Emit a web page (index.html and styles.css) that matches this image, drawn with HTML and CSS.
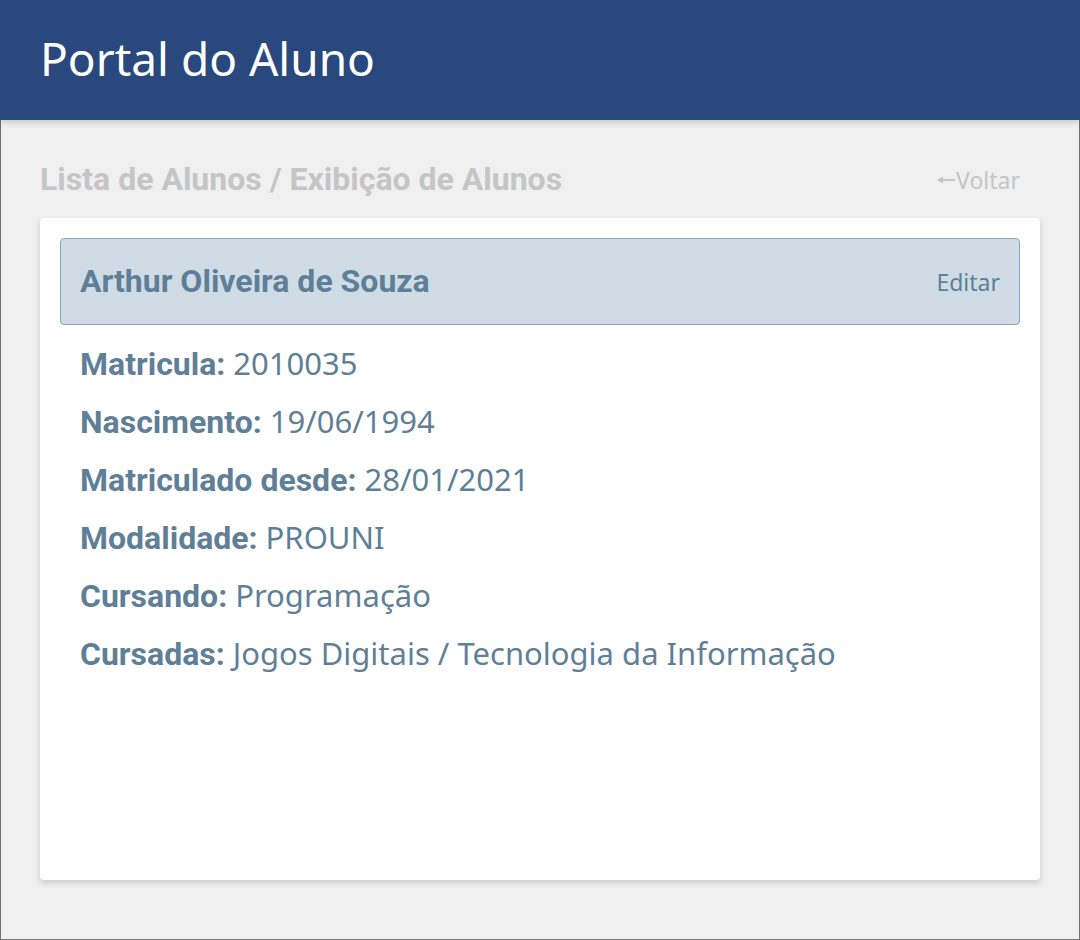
FILE: index.html
```html
<!DOCTYPE html>
<html lang="pt-BR">
<head>
  <meta charset="utf-8">
  <meta name="viewport" content="width=device-width, initial-scale=1">
  <title>Portal do Aluno</title>
  <link rel="stylesheet" href="styles.css">
</head>
<body class="page">
  <header class="topbar">
    <h1 class="topbar-title">Portal do Aluno</h1>
  </header>
  <main class="content">
    <div class="heading-row">
      <h2 class="heading">Lista de Alunos / Exibição de Alunos</h2>
      <a class="action back" href="#"><svg class="back-arrow" viewBox="0 0 20 24" aria-hidden="true"><path d="M1 12 7 8.500V11H19V13H7V15.500Z"/></svg>Voltar</a>
    </div>
    <section class="card">
      <div class="student">
        <h3 class="heading">Arthur Oliveira de Souza</h3>
        <a class="action" href="#">Editar</a>
      </div>
      <dl class="details">
        <div class="detail"><dt class="label">Matricula:</dt><dd class="value">2010035</dd></div>
        <div class="detail"><dt class="label">Nascimento:</dt><dd class="value">19/06/1994</dd></div>
        <div class="detail"><dt class="label">Matriculado desde:</dt><dd class="value">28/01/2021</dd></div>
        <div class="detail"><dt class="label">Modalidade:</dt><dd class="value">PROUNI</dd></div>
        <div class="detail"><dt class="label">Cursando:</dt><dd class="value">Programação</dd></div>
        <div class="detail"><dt class="label">Cursadas:</dt><dd class="value">Jogos Digitais / Tecnologia da Informação</dd></div>
      </dl>
    </section>
  </main>
</body>
</html>
```
FILE: styles.css
```css
* {
  box-sizing: border-box;
}

.page {
  margin: 0;
  min-height: 100vh;
  display: flex;
  flex-direction: column;
  background: #f0f0f0;
  color: #5f7f98;
  font-family: "Noto Sans", sans-serif;
}

.topbar {
  position: relative;
  padding: 26px 40px 30px;
  background: #29487d;
  box-shadow: 0 3px 6px rgba(0, 0, 0, 0.16);
  color: #fff;
}

.topbar-title {
  margin: 0;
  font-size: 46px;
  font-weight: 400;
  line-height: 64px;
}

.content {
  flex: 1;
  display: flex;
  flex-direction: column;
  gap: 19px;
  padding: 40px 39px 59px;
  border: 1px solid #707070;
  border-top: 0;
}

.heading-row,
.student {
  display: flex;
  align-items: center;
  justify-content: space-between;
  gap: 20px;
}

.heading-row {
  padding-right: 20px;
  color: #c5c5c5;
}

.heading {
  margin: 0;
  font-family: Roboto, sans-serif;
  font-size: 32px;
  font-weight: 700;
  line-height: 39px;
}

.action {
  color: inherit;
  font-size: 23px;
  line-height: 32px;
  text-decoration: none;
}

.back {
  display: flex;
  align-items: center;
}

.back-arrow {
  width: 20px;
  height: 24px;
  fill: currentColor;
}

.card {
  flex: 1;
  padding: 20px;
  border-radius: 4px;
  background: #fff;
  box-shadow: 0 3px 6px rgba(0, 0, 0, 0.16);
}

.student {
  padding: 23px 19px;
  border: 1px solid #8ba5b9;
  border-radius: 4px;
  background: #d0dce5;
}

.details {
  display: flex;
  flex-direction: column;
  gap: 18px;
  margin: 19px 0 0;
  padding: 0 20px;
  font-size: 31px;
  line-height: 39px;
}

.detail {
  display: flex;
  align-items: baseline;
  flex-wrap: wrap;
  column-gap: 8px;
}

.label {
  font-family: Roboto, sans-serif;
  font-size: 32px;
  font-weight: 700;
}

.value {
  margin: 0;
}
```
